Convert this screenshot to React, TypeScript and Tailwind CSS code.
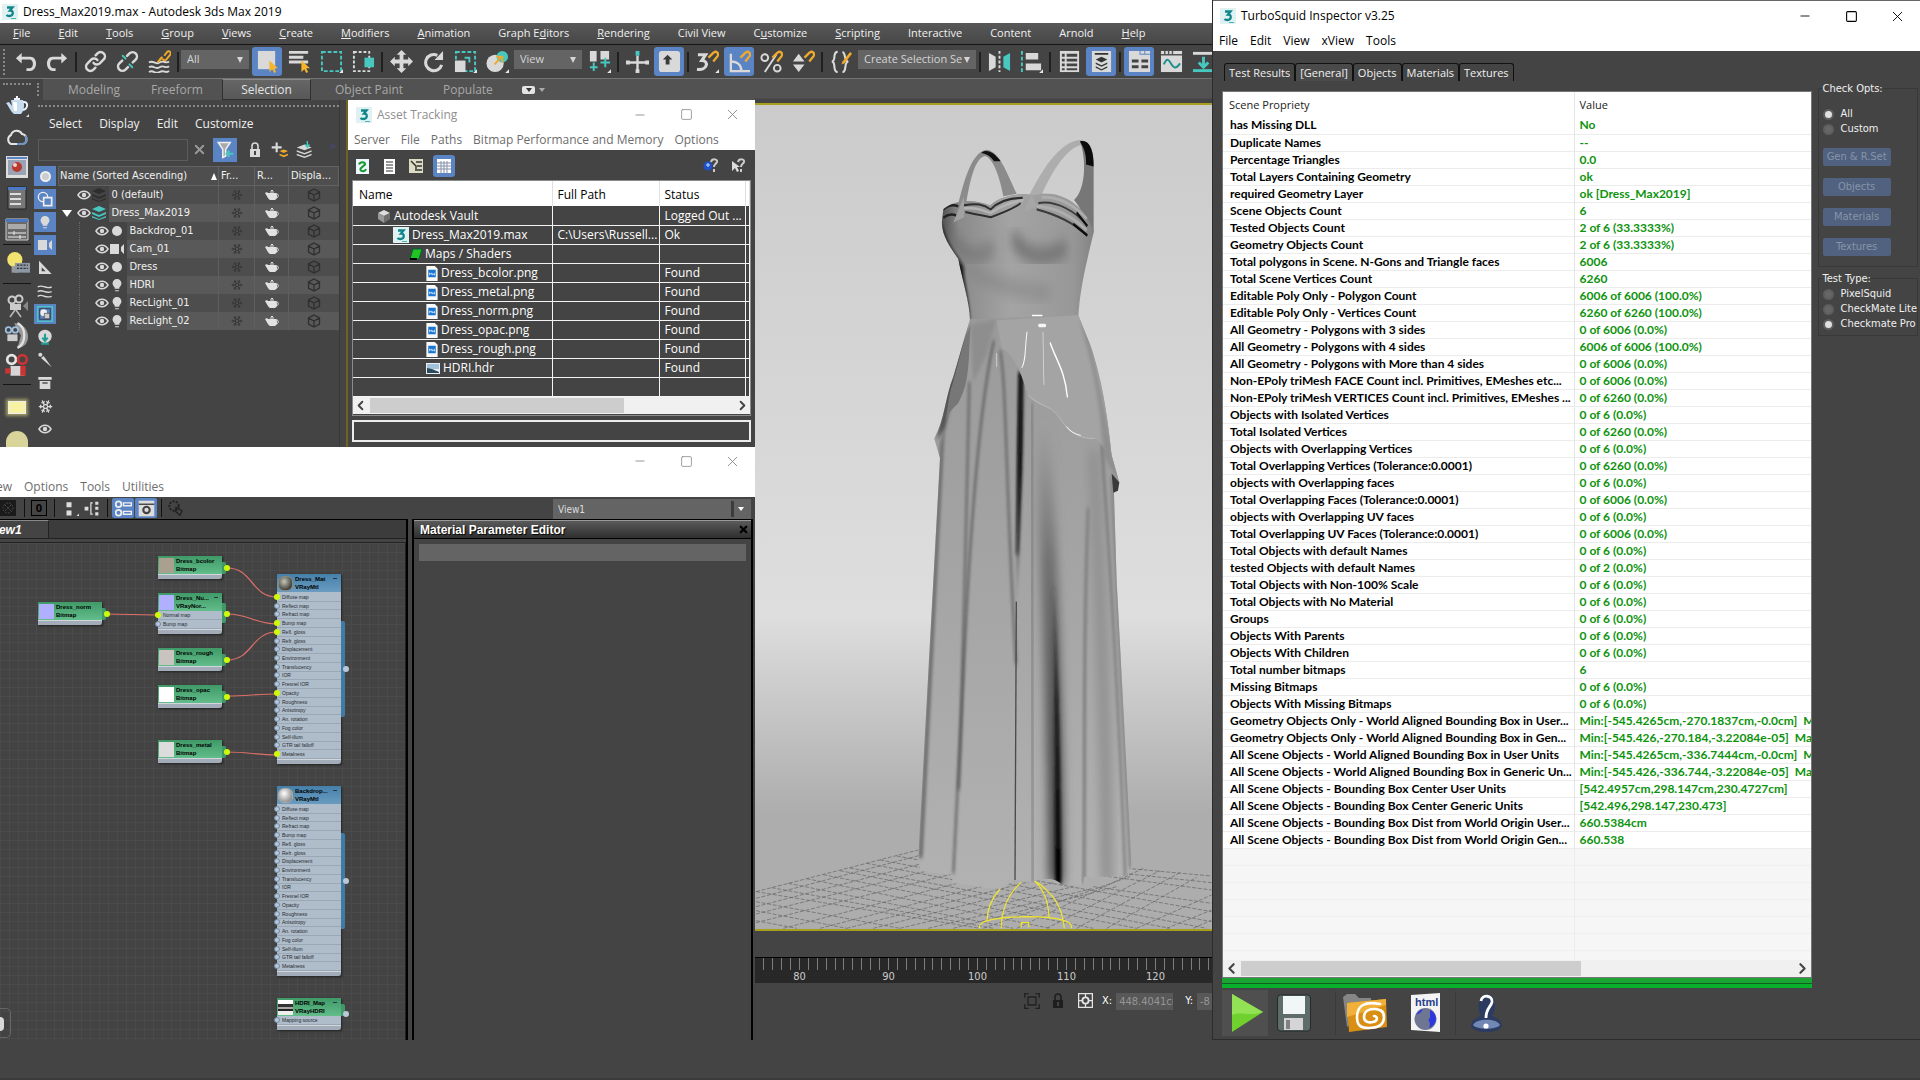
import type { ReactNode } from 'react';
import { ChevronLeft, ChevronRight, Minus, Snowflake, Square, X } from 'lucide-react';

const menuItems = [
  ['', 'F', 'ile'], ['', 'E', 'dit'], ['', 'T', 'ools'], ['', 'G', 'roup'], ['', 'V', 'iews'],
  ['', 'C', 'reate'], ['', 'M', 'odifiers'], ['', 'A', 'nimation'], ['Graph E', 'd', 'itors'],
  ['', 'R', 'endering'], ['Civil View', '', ''], ['C', 'u', 'stomize'], ['', 'S', 'cripting'],
  ['Interactive', '', ''], ['Content', '', ''], ['Arnold', '', ''], ['', 'H', 'elp'],
];

const sceneRows = [
  { name: '0 (default)', level: 0, icon: 'layerOff' },
  { name: 'Dress_Max2019', level: 0, icon: 'layer' },
  { name: 'Backdrop_01', level: 1, icon: 'sphere' },
  { name: 'Cam_01', level: 1, icon: 'camera' },
  { name: 'Dress', level: 1, icon: 'sphere' },
  { name: 'HDRI', level: 1, icon: 'bulb' },
  { name: 'RecLight_01', level: 1, icon: 'bulb' },
  { name: 'RecLight_02', level: 1, icon: 'bulb' },
];

const assetRows = [
  { name: 'Autodesk Vault', path: '', status: 'Logged Out ...', pad: 'pl-6', icon: 'vault' },
  { name: 'Dress_Max2019.max', path: 'C:\\Users\\Russell...', status: 'Ok', pad: 'pl-10', icon: 'max' },
  { name: 'Maps / Shaders', path: '', status: '', pad: 'pl-14', icon: 'maps' },
  { name: 'Dress_bcolor.png', path: '', status: 'Found', pad: 'pl-[73px]', icon: 'png' },
  { name: 'Dress_metal.png', path: '', status: 'Found', pad: 'pl-[73px]', icon: 'png' },
  { name: 'Dress_norm.png', path: '', status: 'Found', pad: 'pl-[73px]', icon: 'png' },
  { name: 'Dress_opac.png', path: '', status: 'Found', pad: 'pl-[73px]', icon: 'png' },
  { name: 'Dress_rough.png', path: '', status: 'Found', pad: 'pl-[73px]', icon: 'png' },
  { name: 'HDRI.hdr', path: '', status: 'Found', pad: 'pl-[73px]', icon: 'hdr' },
  { name: '', path: '', status: '', pad: '', icon: '' },
];

const properties = [
  ['has Missing DLL', 'No'],
  ['Duplicate Names', '--'],
  ['Percentage Triangles', '0.0'],
  ['Total Layers Containing Geometry', 'ok'],
  ['required Geometry Layer', 'ok [Dress_Max2019]'],
  ['Scene Objects Count', '6'],
  ['Tested Objects Count', '2 of 6 (33.3333%)'],
  ['Geometry Objects Count', '2 of 6 (33.3333%)'],
  ['Total polygons in Scene. N-Gons and Triangle faces', '6006'],
  ['Total Scene Vertices Count', '6260'],
  ['Editable Poly Only - Polygon Count', '6006 of 6006 (100.0%)'],
  ['Editable Poly Only - Vertices Count', '6260 of 6260 (100.0%)'],
  ['All Geometry - Polygons with 3 sides', '0 of 6006 (0.0%)'],
  ['All Geometry - Polygons with 4 sides', '6006 of 6006 (100.0%)'],
  ['All Geometry - Polygons with More than 4 sides', '0 of 6006 (0.0%)'],
  ['Non-EPoly triMesh FACE Count incl. Primitives, EMeshes etc...', '0 of 6006 (0.0%)'],
  ['Non-EPoly triMesh VERTICES Count incl. Primitives, EMeshes ...', '0 of 6260 (0.0%)'],
  ['Objects with Isolated Vertices', '0 of 6 (0.0%)'],
  ['Total Isolated Vertices', '0 of 6260 (0.0%)'],
  ['Objects with Overlapping Vertices', '0 of 6 (0.0%)'],
  ['Total Overlapping Vertices (Tolerance:0.0001)', '0 of 6260 (0.0%)'],
  ['objects with Overlapping faces', '0 of 6 (0.0%)'],
  ['Total Overlapping Faces (Tolerance:0.0001)', '0 of 6006 (0.0%)'],
  ['objects with Overlapping UV faces', '0 of 6 (0.0%)'],
  ['Total Overlapping UV Faces (Tolerance:0.0001)', '0 of 6006 (0.0%)'],
  ['Total Objects with default Names', '0 of 6 (0.0%)'],
  ['tested Objects with default Names', '0 of 2 (0.0%)'],
  ['Total Objects with Non-100% Scale', '0 of 6 (0.0%)'],
  ['Total Objects with No Material', '0 of 6 (0.0%)'],
  ['Groups', '0 of 6 (0.0%)'],
  ['Objects With Parents', '0 of 6 (0.0%)'],
  ['Objects With Children', '0 of 6 (0.0%)'],
  ['Total number bitmaps', '6'],
  ['Missing Bitmaps', '0 of 6 (0.0%)'],
  ['Objects With Missing Bitmaps', '0 of 6 (0.0%)'],
  ['Geometry Objects Only - World Aligned Bounding Box in User...', 'Min:[-545.4265cm,-270.1837cm,-0.0cm]  Max'],
  ['Geometry Objects Only - World Aligned Bounding Box in Gen...', 'Min:[-545.426,-270.184,-3.22084e-05]  Max'],
  ['All Scene Objects - World Aligned Bounding Box in User Units', 'Min:[-545.4265cm,-336.7444cm,-0.0cm]  Max'],
  ['All Scene Objects - World Aligned Bounding Box in Generic Un...', 'Min:[-545.426,-336.744,-3.22084e-05]  Max'],
  ['All Scene Objects - Bounding Box Center User Units', '[542.4957cm,298.147cm,230.4727cm]'],
  ['All Scene Objects - Bounding Box Center Generic Units', '[542.496,298.147,230.473]'],
  ['All Scene Objects - Bounding Box Dist from World Origin User...', '660.5384cm'],
  ['All Scene Objects - Bounding Box Dist from World Origin Gen...', '660.538'],
];

const materialSlots = [
  'Diffuse map', 'Reflect map', 'Refract map', 'Bump map', 'Refl. gloss', 'Refr. gloss', 'Displacement',
  'Environment', 'Translucency', 'IOR', 'Fresnel IOR', 'Opacity', 'Roughness', 'Anisotropy', 'An. rotation',
  'Fog color', 'Self-illum', 'GTR tail falloff', 'Metalness',
];

/* ---------- Icons ---------- */

function Svg({ children, box = '0 0 24 24', className = 'size-6' }: { children: ReactNode; box?: string; className?: string }) {
  return (
    <svg viewBox={box} className={`shrink-0 ${className}`} fill="none" aria-hidden="true">
      {children}
    </svg>
  );
}

const Magnet = () => (
  <path d="M13 8l5-5c3-3 7 1 4 4l-4 5" stroke="#f0a92a" strokeWidth="2.4" />
);

const Cursor = () => (
  <path d="M14 11v12l3-3 2 4 2-1-2-4h4z" fill="#f7b52c" />
);

const Corner = () => <path d="M24 20v4h-4z" fill="#e8e8e8" />;

const tools: Record<string, ReactNode> = {
  undo: <path d="M8 3L2 8.500l6 5.500v-4h8c5 0 5 9 0 9h-3v3h4c8-1 8-15 0-15H8z" fill="#d9d9d9" />,
  redo: <path d="M16 3l6 5.500-6 5.500v-4H8c-5 0-5 9 0 9h2v3H7C-1 21-1 7 7 7h9z" fill="#d9d9d9" />,
  link: (
    <g stroke="#d9d9d9" strokeWidth="2.600" strokeLinecap="round">
      <path d="M10 13.500a4.500 4.500 0 0 0 6.500.4l4-4a4.500 4.500 0 0 0-6.400-6.400l-2 2" />
      <path d="M14 10.500a4.500 4.500 0 0 0-6.500-.4l-4 4a4.500 4.500 0 0 0 6.400 6.400l2-2" />
    </g>
  ),
  unlink: (
    <g strokeWidth="2.600" strokeLinecap="round">
      <path d="M17.500 13l3-3a4.500 4.500 0 0 0-6.400-6.400l-2.600 2.600M6.500 11l-3 3a4.500 4.500 0 0 0 6.400 6.400l2.600-2.600" stroke="#d9d9d9" />
      <path d="M7 6l3 3M17 18l-3-3" stroke="#47c7c0" strokeWidth="2" />
    </g>
  ),
  bind: (
    <>
      <path d="M1 13c5-3 6 3 11 0s6 2 10-1M1 18c5-3 6 3 11 0s6 2 10-1M1 23c5-3 6 3 11 0s6 2 10-1" stroke="#d9d9d9" strokeWidth="2" />
      <path d="M12 11l3-4m2-1l3-4c2-2 5 1 3 3l-4 5c-1 1-3 1-4-1m-1-1l-4 5" stroke="#f0a92a" strokeWidth="2" />
    </>
  ),
  select: <><path d="M2 1h18v19H2z" fill="#d9d9d9" /><Cursor /></>,
  selectName: <><path d="M1 1h20v3H1zM1 6h15v3H1zM1 11h20v3H1z" fill="#d9d9d9" /><Cursor /></>,
  region: <><path d="M2 2h20v20H2z" stroke="#47c7c0" strokeWidth="2" strokeDasharray="4 2" /><Corner /></>,
  crossing: <><path d="M2 2h16v20H2z" stroke="#d9d9d9" strokeWidth="2" strokeDasharray="3 2" /><path d="M13 8h10v10H13z" fill="#47c7c0" /></>,
  move: <path d="M12 0l5 5h-3v5h5V7l5 5-5 5v-3h-5v5h3l-5 5-5-5h3v-5H5v3l-5-5 5-5v3h5V5H7z" fill="#d9d9d9" />,
  rotate: <><path d="M16 5.500a8.500 8.500 0 1 0 4.500 10" stroke="#d9d9d9" strokeWidth="3.200" /><path d="M13 10.500h9V1z" fill="#d9d9d9" /></>,
  scale: <><path d="M2 2h20v20H2z" stroke="#47c7c0" strokeWidth="2" strokeDasharray="4 2" /><path d="M1 11h11v12H1z" fill="#d9d9d9" /><path d="M11 8h5v5" stroke="#47c7c0" strokeWidth="2" /><Corner /></>,
  place: (
    <>
      <circle cx="9.500" cy="14" r="9" fill="#d9d9d9" />
      <circle cx="17" cy="7" r="6" fill="#47c7c0" />
      <path d="M9 15l7-8m-5 0h6v6" stroke="#f0a92a" strokeWidth="2" />
      <Corner />
    </>
  ),
  pivot: <><path d="M2 1h7v11H2zM13 1h9v9h-9z" fill="#d9d9d9" /><path d="M6 13v9m-4-4h8M18 8v10m-5-5h10" stroke="#47c7c0" strokeWidth="2" /><Corner /></>,
  manipulate: <><path d="M12 6v17M2 13h20" stroke="#d9d9d9" strokeWidth="2.500" /><path d="M10 1h4v5h-4z" fill="#47c7c0" /><path d="M0 11h4v4H0zM20 11h4v4h-4zM10 20h4v4h-4z" fill="#d9d9d9" /></>,
  keyboard: <><rect x="1" y="1" width="22" height="22" rx="3" fill="#d9d9d9" /><path d="M10 5l5 5h-3v5H8v-5H5z" fill="#3c3c3c" /></>,
  snap3: <><path d="M2 5h8l-4 6c8 0 6 11-5 9" stroke="#d9d9d9" strokeWidth="3.200" /><Magnet /><Corner /></>,
  angle: <><path d="M3 4v18h20M3 12c7 0 11 4 11 10" stroke="#d9d9d9" strokeWidth="2.400" /><Magnet /></>,
  percent: <><circle cx="5" cy="8" r="3.500" stroke="#d9d9d9" strokeWidth="2" /><circle cx="18" cy="19" r="3.500" stroke="#d9d9d9" strokeWidth="2" /><path d="M5 23L17 5" stroke="#d9d9d9" strokeWidth="2" /><Magnet /></>,
  spinner: <><path d="M7 4l6 8H1zM7 23l6-8H1z" fill="#d9d9d9" /><Magnet /></>,
  sets: <><path d="M8 2C2 2 7 11 2 12c5 1 0 11 6 11M13 2c4 1 1 9 6 10-5 1-1 11-6 11" stroke="#d9d9d9" strokeWidth="2.200" /><path d="M13 12l8-10 2 2-8 10-3 1z" fill="#f0a92a" /></>,
  mirror: <><path d="M1 3l7 4v11l-7 4z" fill="#d9d9d9" /><path d="M12 1v22" stroke="#d9d9d9" strokeWidth="2" strokeDasharray="3 2" /><path d="M23 3l-7 4v11l7 4z" fill="#47c7c0" /></>,
  align: <><path d="M2 1v23" stroke="#47c7c0" strokeWidth="2" strokeDasharray="4 2" /><path d="M6 3h13v7H6zM6 14h16v7H6z" fill="#d9d9d9" /><Corner /></>,
  layers: <><path d="M2 1h20v22H2z" fill="#d9d9d9" /><path d="M4 4h3v3H4zM9 4h11v3H9zM4 9h3v3H4zM9 9h11v3H9zM4 14h3v3H4zM9 14h11v3H9zM4 19h3v2H4zM9 19h11v2H9z" fill="#444" /></>,
  ribbon: <><path d="M2 1h20v22H2z" fill="#d9d9d9" /><path d="M5 3h14v2H5zM12 7l6 3-6 3-6-3zM6 13l6 3 6-3v1.500l-6 3-6-3zM6 17l6 3 6-3v1.500l-6 3-6-3z" fill="#333" /></>,
  schematic: <><path d="M1 1h11v4h11v18H1z" fill="#d9d9d9" /><path d="M13 1h4v3h-4zM18 1h5v3h-5z" fill="#d9d9d9" /><path d="M4 10h7v3H4zM14 10h7v3h-7zM4 16h7v3H4zM14 16h7v3h-7z" fill="#444" /></>,
  curve: <><path d="M1 1h22v22H1z" fill="#d9d9d9" /><path d="M1 5h22M5 1v4M9 1v4M13 1v4" stroke="#555" strokeWidth="1.500" /><path d="M4 15c4-9 6-3 8 0s4 6 9-1" stroke="#1e8f8c" strokeWidth="2" /></>,
  render: <><path d="M1 2h22v3H1z" fill="#d9d9d9" /><path d="M12 7v10m-5-4l5 5 5-5" stroke="#47c7c0" strokeWidth="3" /><path d="M1 20h22v3H1z" fill="#47c7c0" /></>,
};

const MaxLogo = ({ className = 'size-4' }: { className?: string }) => (
  <Svg box="0 0 16 16" className={className}>
    <path d="M0 0h16v16H0z" fill="#dff1f1" />
    <path d="M5 3.500h5.500L8 6.500c4 0 3.500 5.500-.5 5.500-1.500 0-2.500-.4-3-1" stroke="#11868c" strokeWidth="2.300" />
    <path d="M9 14h5v1H9z" fill="#47b5b5" />
  </Svg>
);

const Padlock = ({ className = 'h-4 w-3', color }: { className?: string; color: string }) => (
  <Svg box="0 0 12 16" className={className}>
    <path d="M3 7V4c0-4 6-4 6 0v3" stroke={color} strokeWidth="1.600" />
    <path d="M1 7h10v8H1zM5 9v4h2V9z" fill={color} fillRule="evenodd" />
  </Svg>
);

const Eye = () => (
  <Svg box="0 0 14 10" className="h-[10px] w-[14px]">
    <path d="M1 5c3-5 9-5 12 0-3 5-9 5-12 0z" stroke="#d9d9d9" strokeWidth="1.500" />
    <circle cx="7" cy="5" r="2.200" fill="#d9d9d9" />
  </Svg>
);

const Teapot = () => (
  <Svg box="0 0 16 12" className="h-3 w-4">
    <path d="M4 4h8c2 3 1 6-1 7H6C4 10 3 7 1 4l2-1zM6 2.500h4v1H6zM7 1h2v1H7z" fill="#e2e2e2" />
    <path d="M12 5c3-1 3 4 0 4" stroke="#e2e2e2" />
  </Svg>
);

const Cube = () => (
  <Svg box="0 0 14 14" className="size-[14px]">
    <path d="M7 1l5.500 3v6L7 13l-5.500-3V4zM1.500 4L7 7l5.500-3M7 7v6" stroke="#2f2f2f" strokeWidth="1.300" />
  </Svg>
);

const Bulb = () => (
  <Svg box="0 0 12 16" className="h-[15px] w-3">
    <path d="M3.500 10C-1 6 2 1 6 1s7 5 2.500 9v1.500h-5zM4 13h4v1H4z" fill="#d9d9d9" />
  </Svg>
);

const CameraGlyph = () => (
  <Svg box="0 0 14 12" className="h-3 w-[14px]">
    <path d="M0 1h9v10H0zM14 1v10l-3-3V4z" fill="#d9d9d9" />
  </Svg>
);

const LayerStack = ({ off }: { off?: boolean }) => (
  <Svg box="0 0 14 14" className="size-[14px]">
    <path d="M0 3l7-3 7 3-7 3zM0 6l7 3 7-3v2l-7 3-7-3zM0 10l7 3 7-3v1.500L7 14l-7-2.500z" fill={off ? '#2e2e2e' : '#47c7c0'} />
  </Svg>
);

function SceneIcon({ kind }: { kind: string }) {
  if (kind === 'layer' || kind === 'layerOff') return <LayerStack off={kind === 'layerOff'} />;
  if (kind === 'camera') return <CameraGlyph />;
  if (kind === 'bulb') return <Bulb />;
  return <span className="size-[10px] rounded-full bg-[#d9d9d9]" />;
}

function AssetIcon({ kind }: { kind: string }) {
  if (kind === 'max') return <MaxLogo />;
  if (kind === 'vault') {
    return (
      <Svg box="0 0 14 14" className="size-[14px]">
        <path d="M1 4l6-3 6 3-6 3z" fill="#ddd" /><path d="M1 4l6 3v7l-6-4z" fill="#999" /><path d="M13 4L7 7v7l6-4z" fill="#6f6f6f" />
      </Svg>
    );
  }
  if (kind === 'maps') {
    return (
      <Svg box="0 0 13 13" className="size-[13px]">
        <path d="M4 1h9l-3 10H1z" fill="#22c422" stroke="#063" /><path d="M1 11h7" stroke="#000" strokeWidth="2" />
      </Svg>
    );
  }
  if (kind === 'png') {
    return (
      <Svg box="0 0 12 16" className="h-[15px] w-3">
        <path d="M0 0h9l3 3v13H0z" fill="#f8f8f8" /><path d="M2 4h8v8H2z" fill="#1976d2" /><path d="M3 7l2 1 1-1 1 2 2-2v3l-2-1-1 1-1-2-2 2z" fill="#fff" opacity=".85" />
      </Svg>
    );
  }
  if (kind === 'hdr') {
    return (
      <Svg box="0 0 14 11" className="h-[11px] w-[14px]">
        <path d="M0 0h14v11H0z" fill="#e9eef2" /><path d="M1 1h12v5H1z" fill="#9fc3dd" /><path d="M1 5l5 1 7 3v1H1z" fill="#2c4a5c" />
      </Svg>
    );
  }
  return null;
}

/* ---------- Shared pieces ---------- */

function WindowButtons({ dark }: { dark?: boolean }) {
  return (
    <div className={`flex items-center ${dark ? 'text-black' : 'text-[#8a8a8a]'}`}>
      <button aria-label="Minimize" className="flex w-[46px] justify-center"><Minus size={14} strokeWidth={1.500} /></button>
      <button aria-label="Maximize" className="flex w-[46px] justify-center"><Square size={13} strokeWidth={dark ? 2 : 1.500} /></button>
      <button aria-label="Close" className="flex w-[46px] justify-center"><X size={17} strokeWidth={1.300} /></button>
    </div>
  );
}

function Tool({ name, active }: { name: string; active?: boolean }) {
  return (
    <button aria-label={name} className="flex w-8 shrink-0 justify-center">
      <span className={`flex h-[29px] w-[30px] items-center justify-center rounded-[3px] ${active ? 'bg-[#5b84c4]' : ''}`}>
        <Svg className="size-[23px]">{tools[name]}</Svg>
      </span>
    </button>
  );
}

const Sep = () => <span className="mx-[2px] h-5 w-[2px] shrink-0 bg-[#1f1f1f]" />;

function Picker({ label, options, className }: { label: string; options: string[]; className: string }) {
  return (
    <span className={`relative flex shrink-0 ${className}`}>
      <select aria-label={label} className="w-full appearance-none bg-[#646464] pl-[6px] text-[11px] text-[#d5d5d5]">
        {options.map((o) => <option key={o}>{o}</option>)}
      </select>
      <span className="pointer-events-none absolute top-[7px] right-[6px] border-x-[3px] border-t-[6px] border-x-transparent border-t-[#d5d5d5]" />
    </span>
  );
}

/* ---------- Main window ---------- */

function MainHeader() {
  return (
    <header className="shrink-0 overflow-hidden">
      <div className="flex h-[23px] items-center gap-[5px] bg-white pl-[2px] text-[12px] text-black">
        <MaxLogo />
        <h1 className="whitespace-nowrap">Dress_Max2019.max - Autodesk 3ds Max 2019</h1>
      </div>
      <nav className="flex h-[22px] items-center gap-7 border-b border-[#151515] bg-linear-to-b from-[#585858] to-[#474747] pl-[13px] text-[11px] text-[#f0f0f0]">
        {menuItems.map(([before, key, after]) => (
          <button key={before + key + after} className="whitespace-nowrap">
            {before}<span className="underline">{key}</span>{after}
          </button>
        ))}
      </nav>
      <div className="flex h-[34px] items-center border-b border-[#747474] bg-[#444] pl-[3px]">
        <span className="h-[26px] w-[6px] shrink-0 border-l-2 border-dotted border-[#888]" />
        <Tool name="undo" /><Tool name="redo" /><Sep />
        <Tool name="link" /><Tool name="unlink" /><Tool name="bind" /><Sep />
        <Picker label="Selection filter" options={['All']} className="mt-[5px] mr-[2px] h-[19px] w-[68px] self-start" />
        <Tool name="select" active /><Tool name="selectName" /><Tool name="region" /><Tool name="crossing" /><Sep />
        <Tool name="move" /><Tool name="rotate" /><Tool name="scale" /><Tool name="place" />
        <Picker label="Coordinate system" options={['View']} className="mx-px mt-[5px] h-[19px] w-[68px] self-start" />
        <Tool name="pivot" /><Sep />
        <Tool name="manipulate" /><Tool name="keyboard" active /><Sep />
        <Tool name="snap3" /><Tool name="angle" active /><Tool name="percent" /><Tool name="spinner" /><Sep />
        <Tool name="sets" />
        <Picker label="Named selection sets" options={['Create Selection Se']} className="mx-px mt-[5px] h-[19px] w-[118px] self-start" /><Sep />
        <Tool name="mirror" /><Tool name="align" /><Sep />
        <Tool name="layers" /><Tool name="ribbon" active /><Sep />
        <Tool name="schematic" active /><Tool name="curve" /><Tool name="render" />
      </div>
    </header>
  );
}

function Ribbon() {
  return (
    <div className="flex h-[21px] shrink-0 items-stretch">
      <span className="my-1 mr-[4px] ml-[3px] w-[2px] border-l-2 border-dotted border-[#888]" />
      <div className="flex flex-1 items-stretch bg-[#525252] pl-[25px] text-[12px] text-[#a8a8a8]">
        <button className="w-[83px] text-left">Modeling</button>
        <button className="w-[71px] text-left">Freeform</button>
        <button className="w-[89px] border border-[#303030] border-t-[#8a8a8a] bg-linear-to-b from-[#666] to-[#585858] text-[#e4e4e4]">Selection</button>
        <button className="ml-[24px] w-[108px] text-left">Object Paint</button>
        <button className="w-[79px] text-left">Populate</button>
        <button aria-label="Ribbon options" className="flex items-center gap-1">
          <span className="flex h-2 w-[13px] items-center justify-center rounded-[2px] bg-[#e4e4e4]">
            <span className="border-x-[3px] border-t-4 border-x-transparent border-t-[#333]" />
          </span>
          <span className="border-x-[3px] border-t-4 border-x-transparent border-t-[#aaa]" />
        </button>
      </div>
    </div>
  );
}

function LeftToolbar() {
  const rule = <span className="h-px w-7 shrink-0 bg-[#151515]" />;
  return (
    <aside className="flex w-[34px] shrink-0 flex-col items-center overflow-hidden bg-[#444] pt-1">
      <span className="mb-2 h-[2px] w-7 shrink-0 border-t-2 border-dotted border-[#888]" />
      <Svg className="mb-2 size-6">
        <path d="M6 7h12c2 5 1 11-2 14H9C5 18 5 15 1 10l3-1 3 4z" fill="#c8dcf0" /><path d="M18 9c6-1 5 7 0 8M9 6h6M12 3v2" stroke="#eef4fa" strokeWidth="2" /><path d="M8 9h4v9H9z" fill="#fff" />
        <path d="M24 21v3h-3z" fill="#ddd" />
      </Svg>
      <Svg className="mb-[6px] size-6"><path d="M6 19a5 5 0 0 1 0-9 6 6 0 0 1 11-1c6 1 6 10 0 10z" stroke="#e4e4e4" strokeWidth="2" /><path d="M12 19h6c5-2 4-7 2-8" stroke="#6d95c0" strokeWidth="2" /></Svg>
      <Svg className="mb-[7px] size-6"><path d="M1 1h22v22H1z" fill="#ddd" /><path d="M3 5h18v15H3z" fill="#9aa3b5" /><circle cx="12" cy="12" r="5" fill="#b8392f" /><circle cx="10" cy="10" r="2" fill="#f2d0cc" /><path d="M2 2h20v2H2z" fill="#5b84c4" /></Svg>
      <Svg className="mb-[7px] size-6"><path d="M3 1h18v22H3z" fill="#777" stroke="#222" /><path d="M3 1h18v3H3z" fill="#4b78c2" /><path d="M5 8h11M5 13h11M5 18h11" stroke="#ddd" strokeWidth="2" /></Svg>
      <Svg className="mb-[3px] size-6"><path d="M1 2h22v21H1z" fill="#6a6a6a" stroke="#ccc" /><path d="M1 2h22v3H1z" fill="#4b78c2" /><path d="M3 7h18v5H3z" fill="#aaa" /><path d="M3 16h18M3 20h18M9 14v4M15 18v4" stroke="#eee" /></Svg>
      {rule}
      <Svg className="my-[6px] size-[26px]"><circle cx="10" cy="8" r="7" fill="#f3e36f" /><path d="M7 14h6v6H7z" fill="#999" /><path d="M10 11h14v9H10z" fill="#8e98a5" /><path d="M12 13h10M12 16h10" stroke="#333" strokeDasharray="2 1" /></Svg>
      {rule}
      <Svg className="mt-[10px] mb-1 size-6"><circle cx="7" cy="6" r="3.500" stroke="#ccc" strokeWidth="2" /><circle cx="14" cy="5" r="3.500" stroke="#ccc" strokeWidth="2" /><path d="M5 10h11v6H5z" fill="#ccc" /><path d="M18 12l5-5v10z" fill="#888" /><path d="M10 16l-5 7M11 16l5 7" stroke="#bbb" strokeWidth="1.500" /></Svg>
      <Svg className="mb-1 size-[27px]"><path d="M9 1c16 0 16 22 3 22l3-11z" fill="#9a9a9a" /><path d="M12 1c8 4 8 18 0 22" stroke="#e2e2e2" strokeWidth="2" /><circle cx="4" cy="7" r="2.500" stroke="#9fc0e0" strokeWidth="1.500" /><circle cx="10" cy="7" r="2.500" stroke="#9fc0e0" strokeWidth="1.500" /><path d="M3 11h9v6H3z" fill="#ccc" /></Svg>
      <Svg className="mb-[5px] size-[26px]"><circle cx="7" cy="6" r="4" stroke="#e4e4e4" strokeWidth="2.500" /><circle cx="17" cy="6" r="4" stroke="#c93434" strokeWidth="2.500" /><path d="M6 12h13v9H6z" fill="#d6d6d6" /><path d="M15 12h5v9h-5zM1 14h5v5H1z" fill="#c93434" /></Svg>
      {rule}
      <span className="mt-4 h-[13px] w-[18px] shrink-0 border border-[#eee] bg-[#f8f3a4] shadow-[0_0_3px_2px_#a09c6a]" />
      <span className="mt-[17px] h-5 w-[22px] shrink-0 rounded-t-full bg-[#d9d49a]" />
    </aside>
  );
}

function FilterColumn() {
  const cell = 'flex h-5 w-[22px] shrink-0 items-center justify-center';
  const on = `${cell} bg-[#5b84c4]`;
  return (
    <div className="flex w-6 shrink-0 flex-col items-start gap-[3px] overflow-hidden pt-1">
      <button aria-label="Geometry" className={on}><span className="size-[11px] rounded-full border-2 border-[#eee] bg-[#ccc]" /></button>
      <button aria-label="Shapes" className={on}><Svg className="size-4"><circle cx="9" cy="9" r="7" stroke="#eee" strokeWidth="2" /><path d="M10 10h12v12H10z" fill="#5b84c4" stroke="#eee" strokeWidth="2.500" /></Svg></button>
      <button aria-label="Lights" className={on}><Bulb /></button>
      <button aria-label="Cameras" className={on}><CameraGlyph /></button>
      <button aria-label="Helpers" className={cell}><Svg className="size-4"><path d="M3 1l19 20H3zM7 11v6h6z" fill="#d9d9d9" fillRule="evenodd" /></Svg></button>
      <button aria-label="Space warps" className={cell}><Svg className="size-4"><path d="M1 6c8-5 10 4 21 0M1 13c8-5 10 4 21 0M1 20c8-5 10 4 21 0" stroke="#d9d9d9" strokeWidth="2" /></Svg></button>
      <button aria-label="Groups" className={on}><Svg className="size-4"><path d="M1 1h22v22H1z" stroke="#47c7c0" strokeWidth="2" /><path d="M4 4h16v16H4z" stroke="#222" /><circle cx="10" cy="10" r="5" fill="#eee" /><path d="M11 11h8v8h-8z" fill="#ccc" stroke="#444" /></Svg></button>
      <button aria-label="XRefs" className={cell}><Svg className="size-4"><circle cx="12" cy="11" r="10" fill="#d9d9d9" /><path d="M12 7v10m-4-4l4 5 4-5M6 22h12" stroke="#1e9f98" strokeWidth="3" /></Svg></button>
      <button aria-label="Bones" className={cell}><Svg className="size-4"><circle cx="5" cy="4" r="3" fill="#d9d9d9" /><path d="M6 9l4-3 12 17z" fill="#d9d9d9" /></Svg></button>
      <button aria-label="Containers" className={cell}><Svg className="size-4"><path d="M2 3h20v4H2zM4 9h16v12H4z" fill="#d9d9d9" /><path d="M8 12h8" stroke="#444" strokeWidth="2" /></Svg></button>
      <button aria-label="Frozen" className={`${cell} text-[#d9d9d9]`}><Snowflake size={15} /></button>
      <button aria-label="Hidden" className={cell}><Eye /></button>
    </div>
  );
}

function SceneExplorer() {
  return (
    <section className="flex min-w-0 flex-1 font-['DejaVu_Sans_Condensed','DejaVu_Sans',sans-serif] text-[11px] text-[#f0f0f0]">
      <div className="mr-[6px] flex min-w-0 flex-1 flex-col border-r border-[#383838]">
        <span className="mt-[5px] ml-1 h-[2px] border-t-2 border-dotted border-[#888]" />
        <nav className="flex h-[30px] items-center gap-[17px] pt-[3px] pl-[15px] font-['Open_Sans','Noto_Sans',sans-serif] text-[12px] leading-4">
          <button>Select</button><button>Display</button><button>Edit</button><button>Customize</button>
        </nav>
        <div className="flex h-[25px] items-center pl-1 text-[#d9d9d9]">
          <input aria-label="Filter" className="h-[22px] w-[150px] border border-[#5c5c5c] bg-[#444]" />
          <button aria-label="Clear filter" className="ml-[4px]"><X size={15} strokeWidth={3} className="text-[#999]" /></button>
          <button aria-label="Filter by selection" className="ml-[6px] flex h-6 w-6 items-center justify-center bg-[#5b84c4]">
            <Svg className="size-[18px]"><path d="M3 2h16l-6 9v9l-4 2V11z" fill="#aaa" stroke="#eee" strokeWidth="2" /><path d="M23 17h-8m3-4l-4 4 4 4" stroke="#47c7c0" strokeWidth="2.500" /></Svg>
          </button>
          <button aria-label="Lock" className="ml-3"><Padlock color="#d9d9d9" /></button>
          <button aria-label="New layer" className="ml-[10px]"><Svg className="size-[17px]"><path d="M8 2v14M1 9h14" stroke="#d9d9d9" strokeWidth="3" /><path d="M12 14l6-2 6 2-6 3zM12 18l6 2 6-2v2l-6 3-6-3z" fill="#f0a92a" /></Svg></button>
          <button aria-label="Add to layer" className="ml-2"><Svg className="size-[17px]"><path d="M1 9l11-4 10 4-10 4zM1 13l11 4 10-4v2l-10 4-11-4zM1 18l11 4 10-4v2l-10 4-11-4z" fill="#d9d9d9" /><path d="M16 0v8m-3-3l3 4 3-4" stroke="#47c7c0" strokeWidth="2" /></Svg></button>
          <button aria-label="More" className="ml-auto pr-[3px] pb-2 text-[12px] leading-3 text-[#4a4a80]">»</button>
        </div>
        <div className="flex min-h-0 flex-1">
          <FilterColumn />
          <div className="mt-1 min-w-0 flex-1">
            <table className="w-full table-fixed border-collapse">
              <colgroup><col /><col className="w-9" /><col className="w-[34px]" /><col className="w-[50px]" /></colgroup>
              <thead>
                <tr className="h-[19px] bg-[#4e4e4e] text-left whitespace-nowrap [&>th]:border [&>th]:border-[#626262] [&>th]:font-normal">
                  <th className="pl-px"><span className="flex items-center justify-between">Name (Sorted Ascending)<span className="mr-px border-x-[3px] border-b-[7px] border-x-transparent border-b-white" /></span></th>
                  <th className="pl-[2px]">Fr...</th><th className="pl-[2px]">R...</th><th className="overflow-hidden pl-[2px]">Displa...</th>
                </tr>
              </thead>
              <tbody>
                {sceneRows.map((row, i) => (
                  <tr key={row.name} className="h-[18px]">
                    <td className="p-0">
                      <span className="flex h-[18px] items-center">
                        <span className="mr-[2px] flex w-4 shrink-0 justify-center">
                          {i === 1 && <span className="border-x-[5px] border-t-[7px] border-x-transparent border-t-white" />}
                        </span>
                        {row.level > 0 && <span className="ml-[2px] h-[18px] w-4 shrink-0 border-l border-dotted border-[#666]" />}
                        <Eye />
                        <span className="mr-[3px] ml-px flex w-[14px] shrink-0 justify-center"><SceneIcon kind={row.icon} /></span>
                        <span className={`flex h-[18px] flex-1 items-center pl-[3px] ${i % 2 ? 'bg-[#595959]' : 'bg-[#4d4d4d]'}`}>{row.name}</span>
                      </span>
                    </td>
                    <td className={`border-l border-[#5f5f5f] p-0 ${i % 2 ? 'bg-[#595959]' : 'bg-[#4d4d4d]'}`}><Snowflake size={12} className="mx-auto text-[#363636]" /></td>
                    <td className={`border-l border-[#5f5f5f] p-0 ${i % 2 ? 'bg-[#595959]' : 'bg-[#4d4d4d]'}`}><span className="flex justify-center"><Teapot /></span></td>
                    <td className={`border-l border-[#5f5f5f] p-0 ${i % 2 ? 'bg-[#595959]' : 'bg-[#4d4d4d]'}`}><span className="flex justify-center"><Cube /></span></td>
                  </tr>
                ))}
              </tbody>
            </table>
          </div>
        </div>
      </div>
      <span className="w-[2px] shrink-0 bg-[#6f6420]" />
    </section>
  );
}

function AssetTracking() {
  return (
    <section className="flex w-[407px] shrink-0 flex-col bg-[#444] text-[12px]">
      <div className="flex h-[29px] items-center justify-between bg-white pl-2 text-[#8f8f8f]">
        <h2 className="flex items-center gap-[5px]"><MaxLogo />Asset Tracking</h2>
        <WindowButtons />
      </div>
      <nav className="flex h-[21px] items-center gap-[11px] bg-white pl-[6px] whitespace-nowrap text-[#6d6d6d]">
        <button>Server</button><button>File</button><button>Paths</button><button>Bitmap Performance and Memory</button><button>Options</button>
      </nav>
      <div className="flex h-[30px] items-center pt-[2px] pr-2 pl-2">
        <button aria-label="Refresh" className="w-[13px]"><Svg box="0 0 13 15" className="h-[15px] w-[13px]"><path d="M0 0h13v15H0z" fill="#eef6ff" /><path d="M3 5.500c1-3 6-3 6 0L4 10m0 0c1 3 5 3 6 0" stroke="#179a2b" strokeWidth="2" /></Svg></button>
        <button aria-label="Status log" className="ml-[15px]"><Svg box="0 0 11 15" className="h-[15px] w-[11px]"><path d="M0 0h11v15H0z" fill="#fff" /><path d="M2 3h7M2 6h7M2 9h7M2 12h7" stroke="#333" /></Svg></button>
        <button aria-label="Tree view" className="ml-[14px]"><Svg box="0 0 14 14" className="size-[14px]"><path d="M0 0h14v14H0z" fill="#dcdcc4" /><path d="M2 2l5 5v5M7 3h6M8 7h5M8 11h5" stroke="#333" strokeWidth="1.500" /></Svg></button>
        <button aria-label="Table view" className="ml-[10px] flex size-[22px] items-center justify-center rounded-[3px] bg-[#5b84c4]"><Svg box="0 0 14 14" className="size-[14px]"><path d="M0 0h14v14H0z" fill="#fff" /><path d="M0 4h14M0 7h14M0 10h14M4 2v12M7 2v12M10 2v12" stroke="#8492a8" /></Svg></button>
        <span className="flex-1" />
        <button aria-label="Help" className="mr-3"><Svg box="0 0 16 16" className="size-4"><circle cx="5" cy="8" r="4.500" fill="#2151c9" /><path d="M3 7h4M5 5v4" stroke="#bfe0ff" /><path d="M8 4c1-4 7-3 6 0-1 2-3 2-3 5m0 2v3" stroke="#ccc" strokeWidth="2" /></Svg></button>
        <button aria-label="Context help"><Svg box="0 0 16 16" className="size-4"><path d="M1 3v10l3-3 2 4 2-1-2-4h3z" fill="#ddd" /><path d="M7 4c1-4 7-3 6 0-1 2-3 2-3 5m0 2v3" stroke="#ccc" strokeWidth="2" /></Svg></button>
      </div>
      <div className="mx-1 flex-1 border border-[#8b8b8b] text-white">
        <table className="w-full table-fixed border-collapse">
          <colgroup><col className="w-[199px]" /><col className="w-[107px]" /><col /><col className="w-1" /></colgroup>
          <thead>
            <tr className="h-[25px] bg-white text-left text-black [&>th]:border-r [&>th]:border-[#e0e0e0] [&>th]:pt-[2px] [&>th]:font-normal">
              <th className="pl-[6px]">Name</th><th className="pl-[5px]">Full Path</th><th className="pl-[5px]">Status</th><th />
            </tr>
          </thead>
          <tbody>
            {assetRows.map((row, i) => (
              <tr key={i} className="h-[19px] border-b border-[#f4f4f4] leading-4 whitespace-nowrap [&>td]:border-r [&>td]:border-[#f4f4f4]">
                <td className="p-0 pt-px"><span className={`flex items-center gap-[3px] ${row.pad}`}><AssetIcon kind={row.icon} />{row.name}</span></td>
                <td className="overflow-hidden p-0 pt-px pl-[5px]">{row.path}</td>
                <td className="overflow-hidden p-0 pt-px pl-[5px]">{row.status}</td>
                <td className="p-0" />
              </tr>
            ))}
          </tbody>
        </table>
        <div className="flex h-[17px] items-center justify-between bg-[#f0f0f0] text-[#444]">
          <ChevronLeft size={15} strokeWidth={3} className="mr-[2px]" />
          <span className="h-[15px] w-[254px] bg-[#cdcdcd]" />
          <span className="flex-1" />
          <ChevronRight size={15} strokeWidth={3} />
        </div>
      </div>
      <div className="mx-1 mt-1 mb-[5px] h-[22px] shrink-0 border-2 border-[#ececec]" />
    </section>
  );
}

/* ---------- Slate material editor ---------- */

type NodeProps = {
  title: string;
  kind: string;
  pos: string;
  thumb: string;
  slots?: string[];
  wired?: number[];
  blue?: boolean;
  output?: boolean;
};

function MaterialNode({ title, kind, pos, thumb, slots = [], wired = [], blue, output = true }: NodeProps) {
  const tall = slots.length > 2;
  return (
    <div className={`absolute w-16 font-['Liberation_Sans',Arial,sans-serif] text-black shadow-[1px_1px_2px_#222] ${pos}`}>
      <div className={`flex h-[18px] items-center gap-[2px] pl-px ${blue ? 'bg-linear-to-b from-[#4580aa] to-[#6a9cc0]' : 'bg-linear-to-b from-[#3f9a68] to-[#62bd8b]'}`}>
        <span className={`size-[15px] shrink-0 ${thumb}`} />
        <span className="min-w-0 flex-1 text-[6px] leading-[8px] font-bold whitespace-nowrap">
          <span className="block">{title}</span>
          <span className="block">{kind}</span>
        </span>
        {slots.length > 0 && <span className="mt-1 mr-1 h-px w-1 shrink-0 self-start bg-[#1d3a4c]" />}
      </div>
      {slots.length > 0 && (
        <ul className={`grid auto-rows-fr bg-[#afbcc9] ${tall ? 'h-[167px] pt-px' : slots.length > 1 ? 'h-[18px]' : 'h-[9px]'}`}>
          {slots.map((slot, i) => (
            <li key={i} className="relative flex items-center border-b border-[#9aa7b5] pl-[5px] text-[5px] leading-[6px] text-[#252b31]">
              <span className={`absolute left-[-3px] size-[6px] rounded-full ${wired.includes(i) ? 'bg-[#cdfb0a]' : 'border border-[#6f89a8] bg-[#b9c8d8]'}`} />
              {slot}
            </li>
          ))}
        </ul>
      )}
      <div className="h-[5px] rounded-br-[3px] border-t border-[#d0d6dc] bg-[#a3adb9]" />
      {tall && <span className="absolute top-[47px] left-16 h-24 w-1 rounded-r-[2px] bg-[#3f7ba6]" />}
      {tall && <span className="absolute top-[92px] left-[66px] size-[6px] rounded-full bg-[#b9c8d8]" />}
      {!tall && <span className={`absolute left-16 w-1 rounded-r-[2px] bg-[#3f9a68] ${slots.length > 1 ? 'top-[10px] h-5' : 'top-[6px] h-3'}`} />}
      {!tall && <span className={`absolute left-[66px] size-[6px] rounded-full ${slots.length > 1 ? 'top-[18px]' : slots.length ? 'top-[13px]' : 'top-[9px]'} ${output ? 'bg-[#cdfb0a]' : 'bg-[#b9c8d8]'}`} />}
    </div>
  );
}

function NodeCanvas() {
  return (
    <div className="relative flex-1 overflow-hidden border-t border-r border-[#222] bg-[#434343] bg-[linear-gradient(#4a4a4a_1px,transparent_1px),linear-gradient(90deg,#4a4a4a_1px,transparent_1px)] bg-size-[9px_9px]">
      <svg className="absolute top-0 left-0 h-[497px] w-[407px]" fill="none" stroke="#df6f6a" strokeWidth="1.200" aria-hidden="true">
        <path d="M106 71L157 72M227 25c26 0 24 29 50 29M227 71c22 0 28 10 50 10M227 117c26 0 24-28 50-28M227 153c20 0 30-2 50-2M227 209c20 0 30 3 50 3" />
      </svg>
      <MaterialNode title="Dress_norm" kind="Bitmap" pos="left-[38px] top-[59px]" thumb="bg-[#b0b0ff]" />
      <MaterialNode title="Dress_bcolor" kind="Bitmap" pos="left-[158px] top-[13px]" thumb="bg-[#aaa08f]" />
      <MaterialNode title="Dress_Nu..." kind="VRayNor..." pos="left-[158px] top-[50px]" thumb="bg-[#b0b0ff]" slots={['Normal map', 'Bump map']} wired={[0]} />
      <MaterialNode title="Dress_rough" kind="Bitmap" pos="left-[158px] top-[105px]" thumb="bg-[#c9c4c0]" />
      <MaterialNode title="Dress_opac" kind="Bitmap" pos="left-[158px] top-[142px]" thumb="bg-white" />
      <MaterialNode title="Dress_metal" kind="Bitmap" pos="left-[158px] top-[197px]" thumb="bg-[#dcdcdc]" />
      <MaterialNode title="Dress_Mat" kind="VRayMtl" pos="left-[277px] top-[31px]" thumb="rounded-[6px] border border-[#8a8a80] bg-radial-[at_40%_35%] from-[#c5c5b8] to-[#45453d] to-70%" slots={materialSlots} wired={[0, 3, 4, 11, 18]} blue />
      <MaterialNode title="Backdrop..." kind="VRayMtl" pos="left-[277px] top-[243px]" thumb="rounded-[6px] border border-[#aaaaaa] bg-radial-[at_40%_35%] from-[#ffffff] to-[#8a8a8a] to-80%" slots={materialSlots} blue />
      <MaterialNode title="HDRI_Map" kind="VRayHDRI" pos="left-[277px] top-[455px]" thumb="bg-[linear-gradient(#fff_0_4px,#333_4px_7px,#aaa_7px_9px,#222_9px_11px,#eee_11px)]" slots={['Mapping source']} output={false} />
      <span className="absolute bottom-[9px] left-0 h-[14px] w-1 rounded-r-[4px] bg-[#d9d9d9]" />
      <span className="absolute bottom-[2px] left-[-20px] h-[30px] w-[31px] rounded-[5px] border border-[#666]" />
    </div>
  );
}

function SlateEditor() {
  return (
    <section className="flex min-h-0 flex-1 flex-col bg-[#444] text-[12px]">
      <div className="flex h-7 shrink-0 items-center justify-end bg-white"><WindowButtons /></div>
      <nav className="flex h-[22px] shrink-0 items-center gap-3 overflow-hidden bg-white pt-[2px] text-[#6d6d6d]">
        <button className="w-[12px]"><span className="float-right">View</span></button><button>Options</button><button>Tools</button><button>Utilities</button>
      </nav>
      <div className="flex h-[22px] shrink-0 items-center">
        <button aria-label="Background" className="flex size-4 items-center justify-center bg-[#1a1a1a]"><Svg className="size-3"><circle cx="12" cy="12" r="10" stroke="#555" strokeWidth="2" strokeDasharray="3 3" /><path d="M6 6l12 12M18 6L6 18" stroke="#555" strokeWidth="2" strokeDasharray="3 2" /></Svg></button>
        <span className="ml-2 h-[18px] w-px bg-[#111]" />
        <button className="ml-[6px] h-4 w-4 border border-black text-[11px] leading-[14px] font-bold text-black">0</button>
        <span className="ml-[7px] h-[18px] w-px bg-[#111]" />
        <button aria-label="Lay out vertical" className="ml-[9px]"><Svg className="size-[15px]"><path d="M4 2h8v8H4zM4 15h8v8H4z" fill="#ddd" /><path d="M24 20v4h-4z" fill="#ddd" /></Svg></button>
        <button aria-label="Lay out children" className="ml-[5px]"><Svg className="size-[15px]"><path d="M1 9h6v6H1zM18 1h5v5h-5zM18 9h5v5h-5zM18 18h5v5h-5z" fill="#ddd" /><path d="M14 3h-3v18h3" stroke="#ddd" strokeWidth="2" /></Svg></button>
        <span className="ml-2 h-[18px] w-px bg-[#111]" />
        <button aria-label="Material browser" className="ml-1 flex h-5 w-[22px] items-center justify-center rounded-[2px] bg-[#5b84c4]"><Svg className="size-[17px]"><circle cx="5" cy="6" r="4" stroke="#eee" strokeWidth="2.500" /><circle cx="5" cy="18" r="4" stroke="#eee" strokeWidth="2.500" /><path d="M12 4h11v4H12zM12 16h11v4H12z" stroke="#eee" strokeWidth="2" /></Svg></button>
        <button aria-label="Parameter editor" className="ml-px flex h-5 w-[22px] items-center justify-center rounded-[2px] bg-[#5b84c4]"><Svg className="size-[17px]"><path d="M1 1h22v22H1z" fill="#ddd" /><path d="M1 6h22" stroke="#444" strokeWidth="2" /><circle cx="12" cy="14" r="4.500" stroke="#444" strokeWidth="3" /></Svg></button>
        <span className="ml-1 h-[18px] w-px bg-[#111]" />
        <button aria-label="Select by material" className="ml-[6px]"><Svg className="size-4"><circle cx="9" cy="9" r="7" stroke="#222" strokeWidth="3" strokeDasharray="3 2" /><path d="M12 11l9 5-3 7-7-6z" stroke="#222" strokeWidth="2" /></Svg></button>
        <span className="flex-1" />
        <span className="relative mr-1 flex h-5 w-[198px] self-end">
          <select aria-label="View" className="w-full appearance-none bg-[#646464] pl-[5px] font-['DejaVu_Sans_Condensed',sans-serif] text-[10px] text-[#ddd]"><option>View1</option></select>
          <span className="pointer-events-none absolute top-[2px] right-[17px] h-4 w-[3px] bg-[#3c3c3c]" />
          <span className="pointer-events-none absolute top-2 right-[7px] border-x-[3px] border-t-4 border-x-transparent border-t-white" />
        </span>
      </div>
      <div className="flex min-h-0 flex-1 font-['Liberation_Sans',Arial,sans-serif]">
        <div className="flex w-[408px] shrink-0 flex-col border-t border-r-2 border-black">
          <div className="mb-[3px] flex h-[19px] shrink-0 border-b border-[#222] bg-[#3c3c3c]">
            <button className="w-[49px] overflow-hidden border-t border-r border-[#888] border-r-[#222] bg-[#444] leading-4 font-bold text-white italic"><span className="float-left -ml-3">View1</span></button>
          </div>
          <NodeCanvas />
        </div>
        <div className="ml-1 flex flex-1 flex-col border-x-2 border-t border-black bg-[#444]">
          <div className="flex h-[19px] items-center justify-between border-t border-b border-t-[#999] border-b-black bg-linear-to-b from-[#5a5a5a] to-[#2f2f2f] pr-[2px] pl-[6px]">
            <h2 className="font-bold text-white [text-shadow:1px_1px_1px_#000]">Material Parameter Editor</h2>
            <button aria-label="Close panel" className="text-black"><X size={11} strokeWidth={5} /></button>
          </div>
          <input aria-label="Material name" disabled className="mx-[5px] mt-[5px] h-[17px] bg-[#646464]" />
        </div>
        <span className="w-[2px]" />
      </div>
    </section>
  );
}

/* ---------- Viewport ---------- */

function DressModel() {
  return (
    <svg viewBox="755 105 457 824" preserveAspectRatio="xMidYMax slice" className="absolute inset-0 size-full" aria-label="Shaded dress model">
      <defs>
        <linearGradient id="cloth" x1="0" x2="0" y1="0" y2="1">
          <stop offset="0" stopColor="#9a9a9a" /><stop offset=".35" stopColor="#a2a2a2" /><stop offset="1" stopColor="#b2b2b2" />
        </linearGradient>
        <linearGradient id="bodice" x1="0" x2="1" y1="0" y2="0">
          <stop offset="0" stopColor="#4a4a4a" /><stop offset=".12" stopColor="#8a8a8a" /><stop offset=".45" stopColor="#a4a4a4" /><stop offset=".85" stopColor="#989898" /><stop offset="1" stopColor="#808080" />
        </linearGradient>
        <linearGradient id="deepWide" x1="0" x2="0" y1="0" y2="1">
          <stop offset="0" stopColor="#777" stopOpacity="0" /><stop offset=".3" stopColor="#707070" /><stop offset=".7" stopColor="#505050" /><stop offset="1" stopColor="#484848" />
        </linearGradient>
        <linearGradient id="deepCore" x1="0" x2="0" y1="0" y2="1">
          <stop offset="0" stopColor="#333" stopOpacity="0" /><stop offset=".4" stopColor="#222" /><stop offset="1" stopColor="#000" />
        </linearGradient>
        <linearGradient id="upper" x1="0" x2="0" y1="0" y2="1">
          <stop offset="0" stopColor="#333" /><stop offset=".4" stopColor="#111" /><stop offset=".7" stopColor="#555" /><stop offset="1" stopColor="#777" stopOpacity="0" />
        </linearGradient>
        <filter id="soft" x="-50%" y="-10%" width="200%" height="120%"><feGaussianBlur stdDeviation="4" /></filter>
        <filter id="softer" x="-80%" y="-40%" width="260%" height="180%"><feGaussianBlur stdDeviation="14" /></filter>
        <clipPath id="skirtClip">
          <path d="M240 400L565 392 600 448C640 520 655 600 665 660L688 712 672 732 680 900 725 1446 705 1465 582 1466 580 1483 515 1482C500 1465 440 1470 430 1477L375 1472 330 1490 187 1478V1462L90 1455 85 1425 150 665 133 628C165 590 165 550 190 510z" />
        </clipPath>
        <clipPath id="bodiceClip">
          <path d="M155 215L160 190C200 168 260 172 300 182 340 160 400 158 430 163 500 150 560 175 592 205L612 232C590 290 570 340 565 396L240 402C240 370 215 320 205 285 185 265 158 245 155 215z" />
        </clipPath>
      </defs>

      {/* floor grid */}
      <g transform="translate(740 840) scale(.3333)" stroke="#3a3a3a" strokeWidth="2" strokeDasharray="12 5" opacity=".65">
        <path d="M48 155L535 30M48 175L540 46M48 200L580 62M48 222L620 78M48 248L660 96M130 265L720 112M240 265L800 120M320 265L880 122M400 265L940 128M480 265L1000 140M565 265L1060 145M640 265L1130 140M730 265L1170 110M830 265L1210 85M920 265L1260 92M1010 265L1320 98M1100 265L1370 112M1190 265L1415 165M1280 265L1415 210M1360 265L1415 240" />
        <path d="M470 48L1415 215M420 60L1415 245M380 70L1400 265M330 84L1290 265M300 92L1190 265M250 104L1060 265M200 116L930 265M145 130L820 265M95 143L760 265M48 155L720 265M48 185L480 265M48 212L320 265M48 242L170 265M1160 85L1415 108M1100 95L1415 128M1070 105L1415 150M1060 140L1415 190" />
      </g>

      {/* light gizmo */}
      <g transform="translate(740 840) scale(.3333)" stroke="#f1e62c" strokeWidth="3.500" fill="none">
        <path d="M780 147Q742 190 741 242M843 127Q785 180 784 265M883 122Q925 160 927 232M883 122Q965 170 973 265M720 265C712 250 735 232 860 230 965 231 1000 245 994 265M844 262v-14h22v14" />
      </g>

      <g transform="translate(890 110) scale(.3333 .523)">
        {/* straps */}
        <path d="M195 208C215 150 240 80 290 76 330 80 350 120 380 160L340 165C330 130 310 92 285 88 250 92 235 150 222 205z" fill="#8b8b8b" />
        <path d="M274 82C290 72 318 84 332 98L312 98C302 88 290 84 274 82z" fill="#111" />
        <path d="M405 180C450 120 510 55 580 57L580 66C530 70 480 120 440 185z" fill="#adadad" />
        <path d="M570 60C600 55 612 80 611 110V235L590 215C575 190 560 178 552 172 590 150 588 90 570 60z" fill="#777" />
        <path d="M570 60C600 55 612 80 611 108L588 104C590 90 585 75 570 60z" fill="#0c0c0c" />

        <g clipPath="url(#bodiceClip)">
          <path d="M150 150H620V410H150z" fill="url(#bodice)" />
          <path d="M155 215C165 255 200 275 222 300 220 330 235 350 240 400H200L150 250z" fill="#111" filter="url(#soft)" />
          <path d="M190 240C210 280 260 290 310 262" stroke="#6d6d6d" strokeWidth="18" fill="none" filter="url(#softer)" />
          <path d="M370 240C400 290 480 285 530 262" stroke="#646464" strokeWidth="22" fill="none" filter="url(#softer)" />
          <path d="M230 300Q300 340 480 350" stroke="#858585" strokeWidth="18" fill="none" filter="url(#softer)" />
          <path d="M160 190Q180 178 205 184M160 206Q180 196 200 202" stroke="#222" strokeWidth="5" fill="none" />
          <g filter="url(#foldSoft)">
            <path d="M222 182C260 178 280 180 302 190 330 172 370 168 398 168M226 195C260 200 280 202 302 205 330 198 370 190 392 178" stroke="#2d2d2d" strokeWidth="4" fill="none" />
            <path d="M445 178C500 172 560 195 592 222M440 190C500 200 550 215 592 240" stroke="#3a3a3a" strokeWidth="4" fill="none" />
          </g>
          <path d="M222 188C260 186 280 192 302 197 340 180 370 176 400 172" stroke="#b4b4b4" strokeWidth="5" fill="none" />
          <path d="M455 167C510 165 560 185 590 208M440 184C500 186 550 205 590 230" stroke="#adadad" strokeWidth="6" fill="none" />
          <path d="M560 196L592 222M550 218L592 240" stroke="#0c0c0c" strokeWidth="5" />
        </g>
        <path d="M190 215L222 165 222 205z" fill="#a2a2a2" />
        <path d="M400 195L425 160 440 185z" fill="#a6a6a6" />

        <path d="M150 665L133 628C160 592 168 580 180 540L200 560z" fill="#b4b4b4" />
        <g clipPath="url(#skirtClip)">
          <path d="M70 380H740V1500H70z" fill="url(#cloth)" />
          <path d="M235 405C220 470 195 530 165 610L140 630 180 500z" fill="#555" filter="url(#soft)" />
          <path d="M242 410C235 480 240 520 205 560 190 570 170 580 165 600L180 540C200 500 215 450 242 410z" fill="#777" />
          <path d="M150 640L85 1430H98L165 600z" fill="#6e6e6e" filter="url(#soft)" />
          <path d="M238 520Q225 900 212 1200L206 1300" stroke="#666" strokeWidth="7" fill="none" filter="url(#soft)" />
          <path d="M312 440C270 560 240 800 220 1080L190 1460" stroke="#4c4c4c" strokeWidth="5" fill="none" filter="url(#soft)" />
          <path d="M318 400L288 470 250 520 242 410z" fill="#8e8e8e" filter="url(#soft)" />
          <path d="M330 460C350 520 345 700 378 1060" stroke="#5d5d5d" strokeWidth="6" fill="none" filter="url(#soft)" />
          <path d="M388 500C382 640 385 780 377 960L380 960C392 800 402 640 400 505z" fill="url(#upper)" filter="url(#soft)" />
          <path d="M386 500L397 505 384 850H379z" fill="#111" filter="url(#soft)" />
          <path d="M379 940L375 1480" stroke="#4a4a4a" strokeWidth="4" />
          <path d="M425 560L428 1480" stroke="#6f6f6f" strokeWidth="5" filter="url(#soft)" />
          <path d="M440 600C440 800 470 1000 476 1480H522C520 1200 510 900 480 600z" fill="url(#deepWide)" filter="url(#softer)" />
          <path d="M484 900C496 1100 494 1300 496 1480H514C512 1300 508 1100 496 900z" fill="url(#deepCore)" filter="url(#soft)" />
          <path d="M595 760C580 1000 585 1200 582 1480" stroke="#777" strokeWidth="8" fill="none" filter="url(#soft)" />
          <path d="M610 650C630 900 650 1250 650 1480" stroke="#929292" strokeWidth="36" fill="none" filter="url(#softer)" />
          <path d="M635 640C665 900 690 1200 706 1470" stroke="#6b6b6b" strokeWidth="5" fill="none" filter="url(#soft)" />
          <path d="M665 700L722 1450" stroke="#888" strokeWidth="10" fill="none" filter="url(#soft)" />
          <path d="M320 402L565 392 600 448C640 520 655 600 688 712 650 650 640 640 615 628 560 630 530 610 510 590 480 560 450 570 415 545 400 520 380 470 335 455z" fill="#a4a4a4" />
          <path d="M415 545C450 570 480 560 510 590 530 610 560 630 615 628" stroke="#b8b8b8" strokeWidth="2" fill="none" />
          <path d="M565 400C620 500 635 600 640 660L690 715 600 440z" fill="#838383" filter="url(#soft)" opacity=".6" />
        </g>
        <path d="M665 695L688 712 684 728 670 732z" fill="#3a3a3a" />
        <g stroke="#fff" fill="none" strokeLinecap="round">
          <path d="M411 425C405 450 408 480 396 492" strokeWidth="3" opacity=".9" />
          <path d="M427 393H456" strokeWidth="3" />
          <path d="M448 412H465" strokeWidth="7" opacity=".9" />
          <path d="M459 425Q460 480 462 525" strokeWidth="2" opacity=".7" />
          <path d="M481 446C500 480 525 500 532 548" strokeWidth="4" />
          <path d="M320 466V490" strokeWidth="3" opacity=".5" />
          <path d="M530 606Q548 620 572 622" strokeWidth="2" opacity=".8" />
        </g>
      </g>
      <filter id="foldSoft"><feGaussianBlur stdDeviation="1.500" /></filter>
    </svg>
  );
}

function Viewport() {
  return (
    <div className="flex min-w-0 flex-1 flex-col bg-[#444]">
      <div className="h-5 shrink-0 border-b border-[#4a4a4a] bg-[#525252]" />
      <div className="relative mt-1 flex-1 border-y-2 border-[#a8a01c] bg-linear-to-b from-[#cbcbcb] via-[#dedede] via-62% to-[#adadad] to-86%">
        <DressModel />
      </div>
      <div className="h-[26px] shrink-0" />
      <div className="h-[26px] shrink-0 overflow-hidden border-t border-black bg-[#282828] text-[11px] text-[#ccc]">
        <div className="-ml-[45px] flex h-3">
          {[70, 80, 90, 100, 110, 120].map((group) => (
            <span key={group} className="grid w-[89px] shrink-0 grid-cols-10">
              {Array.from({ length: 10 }, (_, i) => <span key={i} className="border-l border-[#7d7d7d]" />)}
            </span>
          ))}
        </div>
        <div className="flex font-['DejaVu_Sans_Condensed',sans-serif] leading-[13px]">
          {[80, 90, 100, 110, 120].map((frame) => <span key={frame} className="w-[89px] shrink-0 text-center">{frame}</span>)}
        </div>
      </div>
      <div className="flex h-[57px] shrink-0 items-start overflow-hidden pt-[10px] pl-[269px] font-['DejaVu_Sans_Condensed',sans-serif] text-[11px] text-white">
        <button aria-label="Isolate selection" className="mr-[12px]"><Svg className="size-4"><path d="M1 7V1h6M17 1h6v6M23 17v6h-6M7 23H1v-6M6 6h12v12H6z" stroke="#222" strokeWidth="2" /></Svg></button>
        <button aria-label="Lock selection" className="mr-[14px]"><Padlock color="#1e1e1e" /></button>
        <button aria-label="Absolute mode" className="mr-[9px]"><Svg className="size-[15px]"><path d="M1 1h22v22H1z" stroke="#e4e4e4" strokeWidth="2" /><circle cx="12" cy="12" r="5" stroke="#e4e4e4" strokeWidth="3" /><path d="M12 1v6M12 17v6M1 12h6M17 12h6" stroke="#e4e4e4" strokeWidth="2" /></Svg></button>
        <label className="flex shrink-0 items-center gap-1">X:<input defaultValue="448.4041cm" className="h-[17px] w-[57px] bg-[#585858] pl-[3px] text-[#969696]" /></label>
        <label className="ml-3 flex shrink-0 items-center gap-1">Y:<input defaultValue="-8" className="h-[17px] w-[57px] bg-[#585858] pl-[3px] text-[#969696]" /></label>
      </div>
    </div>
  );
}

/* ---------- Inspector ---------- */

function Radio({ name, label, checked }: { name: string; label: string; checked?: boolean }) {
  return (
    <label className="flex h-[15px] items-center gap-[7px] whitespace-nowrap">
      <input type="radio" name={name} defaultChecked={checked} className="size-[11px] shrink-0 appearance-none rounded-full border-2 border-[#5e5e5e] bg-[#666] checked:bg-[#e0e0e0]" />
      {label}
    </label>
  );
}

function Inspector() {
  const small = "font-['DejaVu_Sans_Condensed','DejaVu_Sans',sans-serif]";
  return (
    <main className="flex w-[708px] shrink-0 flex-col border-b border-l border-[#2c2c2c] bg-[#444] text-[12px]">
      <div className="flex h-[31px] shrink-0 items-center justify-between border-t border-[#666] bg-white pl-[7px] text-black">
        <h2 className="flex items-center gap-[5px]"><MaxLogo />TurboSquid Inspector v3.25</h2>
        <WindowButtons dark />
      </div>
      <nav className="flex h-5 shrink-0 items-center gap-3 bg-white pl-[6px] text-black">
        <button>File</button><button>Edit</button><button>View</button><button>xView</button><button>Tools</button>
      </nav>
      <div className="flex min-h-0 flex-1">
        <div className="ml-[9px] flex w-[590px] flex-col">
          <div className="mt-3 flex items-end pl-[2px] text-[11px] text-[#f0f0f0] [&>button]:h-[18px] [&>button]:rounded-t-[3px] [&>button]:border [&>button]:border-b-0 [&>button]:border-[#111] [&>button]:px-[4px] [&>button]:leading-4">
            <button>Test Results</button><button className="bg-[#4a4a4a]">[General]</button><button>Objects</button><button>Materials</button><button>Textures</button>
          </div>
          <div className="mt-[10px] flex flex-1 flex-col border border-[#777] bg-[#f6f6f6]">
            <table className="w-full table-fixed border-collapse bg-white">
              <colgroup><col className="w-[351px]" /><col /></colgroup>
              <thead>
                <tr className="h-[25px] text-left text-[11px] text-[#222] [&>th]:pt-[2px] [&>th]:font-normal"><th className="border-r border-[#dde7ee] pl-[6px]">Scene Propriety</th><th className="pl-[5px]">Value</th></tr>
              </thead>
              <tbody className="font-['Lato','Open_Sans',sans-serif] font-bold">
                {properties.map(([name, value]) => (
                  <tr key={name} className="h-[17px] border-b border-[#ececec] leading-4 whitespace-pre">
                    <td className="overflow-hidden border-r border-[#e6e6e6] p-0 pl-[7px] text-black">{name}</td>
                    <td className="overflow-hidden p-0 pl-[5px] text-[#0d930d]">{value}</td>
                  </tr>
                ))}
              </tbody>
            </table>
            <div className="flex-1 bg-[repeating-linear-gradient(#f6f6f6_0_16px,#efefef_16px_17px)]"><div className="h-full w-[352px] border-r border-[#ececec]" /></div>
            <div className="flex h-[17px] items-center bg-[#f0f0f0] text-[#444]">
              <ChevronLeft size={17} strokeWidth={3} className="mr-px" />
              <span className="h-[15px] w-[340px] bg-[#cdcdcd]" />
              <span className="flex-1" />
              <ChevronRight size={17} strokeWidth={3} />
            </div>
          </div>
          <div className="h-[5px] bg-[#1ba333]" />
          <div className="mb-[2px] h-[5px] border-t border-[#12601f] bg-[#08b02c]" />
          <div className="mb-[3px] flex h-[46px] items-center">
            <button aria-label="Run" className="flex h-[46px] w-[46px] items-center justify-center bg-[#4f4f4f]">
              <Svg box="0 0 34 40" className="ml-1 h-10 w-[34px]"><path d="M2 1l31 18L2 39z" fill="#6fd02e" /><path d="M2 1l31 18C20 24 10 18 2 22z" fill="#93e256" /></Svg>
            </button>
            <button aria-label="Save" className="mr-6 ml-[9px]">
              <Svg box="0 0 34 38" className="h-[38px] w-[34px]"><rect x=".5" y="1" width="33" height="36" rx="3" fill="#5e6d6a" stroke="#252b2a" /><path d="M6 2h22v18H6z" fill="#f1f7f6" /><path d="M7 24h19v12H7z" fill="#d5d5d5" /><path d="M9 26h4v9H9z" fill="#808080" /></Svg>
            </button>
            <span className="mr-[7px] h-11 w-px bg-[#3a3a3a]" />
            <button aria-label="Open folder">
              <Svg box="0 0 44 40" className="h-10 w-11"><path d="M0 4l4-3h8l4 4h12v6L4 34z" fill="#868686" /><path d="M4 10l39-4 1 28-38 5z" fill="#d98e14" /><path d="M4 10l39-4v6L4 24z" fill="#f0b03a" /><path d="M37 11c-16-3-23 2-23 13 0 9 4 11 12 11 9 0 15-3 15-11 0-7-5-8-10-8s-10 2-10 8c0 5 5 6 9 5 5-1 5-6 1-6" stroke="#fff" strokeWidth="2.600" strokeLinecap="round" /></Svg>
            </button>
            <button aria-label="HTML report" className="mr-[14px] ml-[23px]">
              <Svg box="0 0 31 40" className="h-10 w-[31px]"><path d="M1 2l29-2v39L1 37z" fill="#f4f4f4" /><text x="5" y="13" fontSize="11" fontWeight="bold" fontFamily="Liberation Sans" fill="#26408c">html</text><circle cx="15.500" cy="26" r="11" fill="#6e7691" /><path d="M20 17c9 4 7 15-1 18 3-7-3-7 1-10zM6 22c2-3 4-5 7-6-1 3-3 4-7 6z" fill="#2d37e0" /></Svg>
            </button>
            <span className="mr-[14px] h-11 w-px bg-[#3a3a3a]" />
            <button aria-label="Help">
              <Svg box="0 0 33 40" className="h-10 w-[33px]"><path d="M1 33c0-6 6-9 10-10C6 14 9 2 17 1c9 0 10 14 5 22 4 1 10 4 10 10-3 8-28 8-31 0z" fill="#2c3b60" /><path d="M3 32c3-7 24-7 27 0-4 5-23 5-27 0z" fill="#7188b5" /><path d="M11 8c1-7 12-6 11 1-1 5-6 6-6 16" stroke="#fff" strokeWidth="2.800" /><circle cx="16" cy="33" r="2.600" fill="#fff" /></Svg>
            </button>
          </div>
        </div>
        <div className={`mt-[29px] ml-[6px] flex-1 text-[11px] text-[#f0f0f0] ${small}`}>
          <fieldset className="mr-[2px] h-[187px] border border-[#393939] pl-1">
            <legend className="leading-[17px]">Check Opts:</legend>
            <div className="pt-[10px]"><Radio name="opts" label="All" checked /><Radio name="opts" label="Custom" /></div>
            <div className="mt-[11px] flex flex-col gap-3 [&>button]:h-[18px] [&>button]:w-[68px] [&>button]:rounded-[2px] [&>button]:bg-[#50627f] [&>button]:text-[#8794a8]">
              <button disabled className="whitespace-nowrap">Gen &amp; R.Set</button><button disabled>Objects</button><button disabled>Materials</button><button disabled>Textures</button>
            </div>
          </fieldset>
          <fieldset className="mt-[3px] mr-[2px] h-[66px] border border-[#393939] pl-1">
            <legend className="leading-[17px]">Test Type:</legend>
            <Radio name="type" label="PixelSquid" /><Radio name="type" label="CheckMate Lite" /><Radio name="type" label="Checkmate Pro" checked />
          </fieldset>
        </div>
      </div>
    </main>
  );
}

export default function App() {
  return (
    <div className="flex min-h-screen flex-col bg-[#444] font-['Open_Sans','Noto_Sans',sans-serif]">
      <div className="flex flex-1">
        <div className="flex min-w-0 flex-1 flex-col">
          <MainHeader />
          <div className="flex min-h-0 flex-1">
            <div className="flex w-[755px] shrink-0 flex-col">
              <div className="flex h-[368px] shrink-0">
                <LeftToolbar />
                <div className="flex min-w-0 flex-1 flex-col">
                  <Ribbon />
                  <div className="flex min-h-0 flex-1">
                    <SceneExplorer />
                    <AssetTracking />
                  </div>
                </div>
              </div>
              <SlateEditor />
            </div>
            <Viewport />
          </div>
        </div>
        <Inspector />
      </div>
      <footer className="h-10 shrink-0 border-b-2 border-[#3a3a3a]" />
    </div>
  );
}
